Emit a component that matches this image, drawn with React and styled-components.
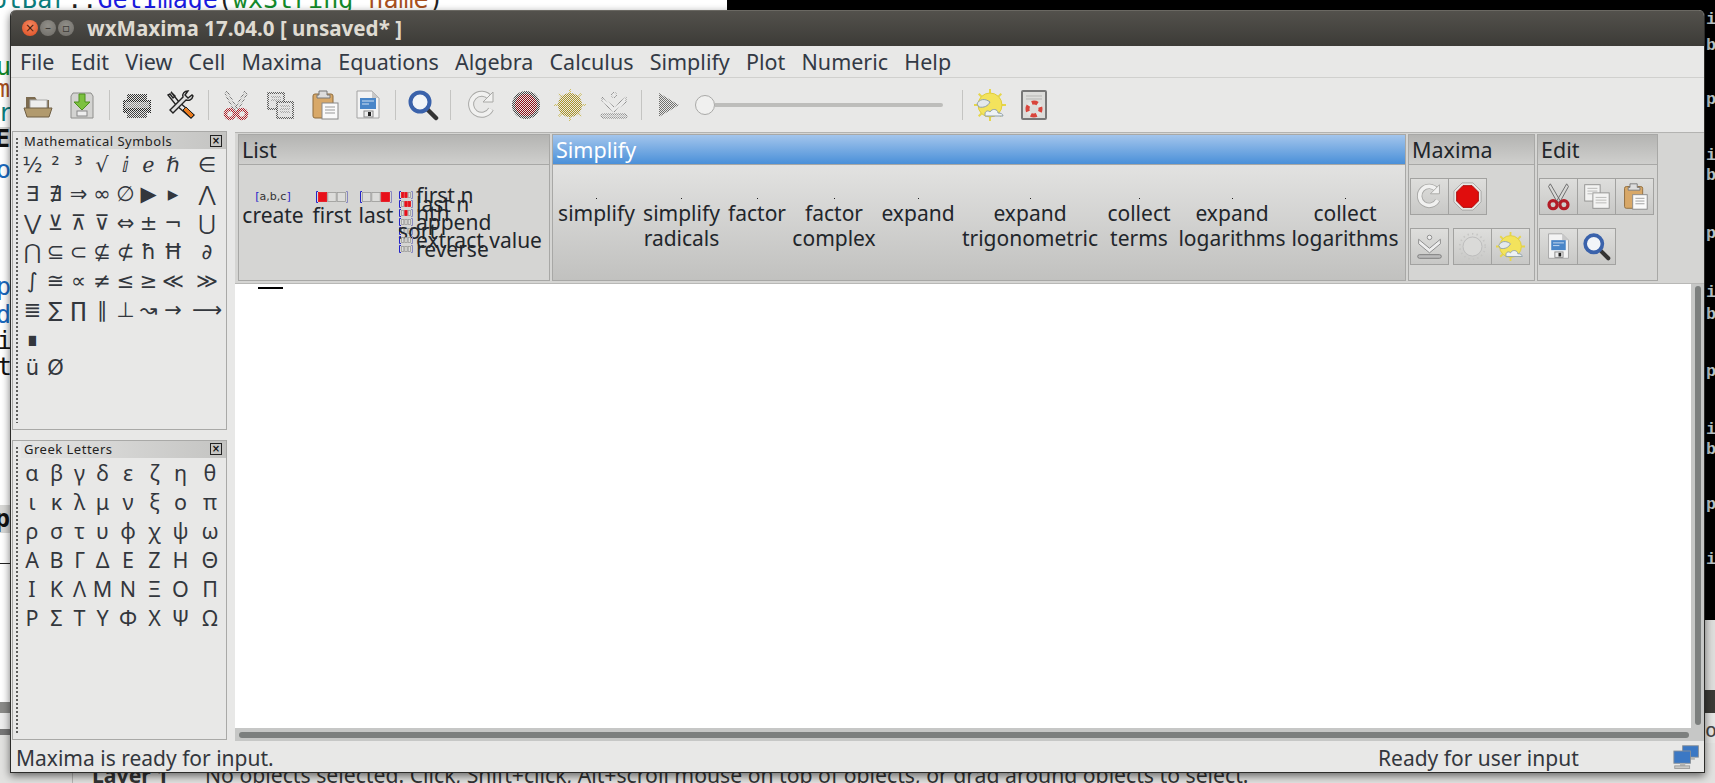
import React from 'react';
import styled, { createGlobalStyle } from 'styled-components';

const GlobalStyle = createGlobalStyle`
  html, body {
    margin: 0;
    padding: 0;
    background: #000;
    overflow: hidden;
  }
`;

const UI_FONT = '"Noto Sans", "Open Sans", sans-serif';

const Desktop = styled.div`
  position: relative;
  width: 1715px;
  height: 783px;
  overflow: hidden;
  background: #000;
  font-family: ${UI_FONT};
`;

// stuff from the other windows, sticking out round the edges
const BackRect = styled.div`
  position: absolute;
  left: ${(p) => p.$x}px;
  top: ${(p) => p.$y}px;
  width: ${(p) => p.$w}px;
  height: ${(p) => p.$h}px;
  background: ${(p) => p.$bg};
`;

const BackText = styled.span`
  position: absolute;
  left: ${(p) => p.$x}px;
  top: ${(p) => p.$y}px;
  font-family: "DejaVu Sans Mono", monospace;
  font-size: ${(p) => p.$size || 25}px;
  line-height: 1;
  font-weight: ${(p) => (p.$bold ? 700 : 400)};
  color: ${(p) => p.$color || '#111'};
  white-space: pre;
`;

const CodeToken = styled.span`
  color: ${(p) => p.$color};
`;

const TermText = styled(BackText)`
  font-family: "Liberation Mono", monospace;
  font-size: 17px;
  font-weight: 700;
  color: #b9c4c8;
`;

const StatusLine = styled.span`
  position: absolute;
  left: ${(p) => p.$x}px;
  top: 760px;
  font-family: ${UI_FONT};
  font-size: 21.200px;
  font-weight: ${(p) => (p.$bold ? 700 : 400)};
  color: #333;
  white-space: pre;
`;

const Window = styled.div`
  position: absolute;
  left: 10px;
  top: 10px;
  width: 1695px;
  height: 763px;
  box-sizing: border-box;
  display: flex;
  flex-direction: column;
  background: #e8e8e7;
  border: 1px solid #2c2c2a;
  border-top: none;
  border-radius: 6px 6px 0 0;
  box-shadow: 0 3px 9px rgba(0, 0, 0, 0.55);
  overflow: hidden;
`;

const TitleBar = styled.div`
  height: 36px;
  flex: none;
  display: flex;
  align-items: center;
  padding: 0 0 1px 11px;
  background: linear-gradient(#53514c, #3c3b37);
  border-top: 1px solid #6a6862;
  box-sizing: border-box;
`;

const WinButton = styled.div`
  width: 16px;
  height: 16px;
  margin-right: 2px;
  border-radius: 50%;
  display: flex;
  align-items: center;
  justify-content: center;
  font-size: 12px;
  line-height: 1;
  color: ${(p) => (p.$close ? '#4a1a08' : '#3b3a36')};
  background: ${(p) =>
    p.$close
      ? 'radial-gradient(circle at 50% 35%, #f58a64, #dc4a1e)'
      : 'radial-gradient(circle at 50% 35%, #918f89, #6d6b66)'};
  font-family: "DejaVu Sans", sans-serif;
`;

const Title = styled.div`
  margin-left: 11px;
  color: #dfdbd2;
  font-size: 20.600px;
  font-weight: 700;
  white-space: pre;
`;

const MenuBar = styled.div`
  height: 32px;
  flex: none;
  box-sizing: border-box;
  display: flex;
  align-items: center;
  gap: 16.200px;
  padding-left: 9px;
  background: #e8e8e7;
  border-bottom: 1px solid #d0d0ce;
`;

const MenuItem = styled.span`
  font-size: 21.500px;
  color: #333a45;
`;

const Toolbar = styled.div`
  height: 54px;
  flex: none;
  box-sizing: border-box;
  display: flex;
  align-items: center;
  padding-left: 5px;
  background: #e8e8e7;
`;

const ToolButton = styled.div`
  width: 44px;
  height: 44px;
  flex: none;
  display: flex;
  align-items: center;
  justify-content: center;
`;

const Separator = styled.div`
  width: 1px;
  height: 30px;
  margin: 0 ${(p) => p.$after || 5}px 0 5px;
  flex: none;
  background: #c4c4c2;
`;

const Slider = styled.div`
  width: 248px;
  flex: none;
  margin: 0 14px 0 4px;
  display: flex;
  align-items: center;
`;

const SliderKnob = styled.div`
  width: 20px;
  height: 20px;
  flex: none;
  box-sizing: border-box;
  border-radius: 50%;
  background: #f0f0ef;
  border: 1px solid #a9a9a7;
`;

const SliderRail = styled.div`
  flex: 1;
  height: 4px;
  border-radius: 0 2px 2px 0;
  background: #bdbdbb;
`;

const Body = styled.div`
  flex: 1;
  min-height: 0;
  display: flex;
`;

const Dock = styled.div`
  width: 224px;
  flex: none;
  display: flex;
  flex-direction: column;
  gap: 10px;
  margin-top: -1px;
  padding: 0 8px 1px 1px;
  box-sizing: border-box;
`;

const DockPane = styled.div`
  flex: ${(p) => p.$grow};
  box-sizing: border-box;
  display: flex;
  border: 1px solid #a9a9a7;
  background: #e8e8e7;
`;

const Gripper = styled.div`
  width: 8px;
  flex: none;
  background-image: repeating-linear-gradient(#5f5f5d 0 2px, transparent 2px 4px);
  background-size: 2px calc(100% - 12px);
  background-position: 3px 6px;
  background-repeat: no-repeat;
`;

const DockInner = styled.div`
  flex: 1;
  min-width: 0;
`;

const DockCaption = styled.div`
  height: 17px;
  display: flex;
  align-items: center;
  justify-content: space-between;
  padding: 0 4px 0 3px;
  font-size: 13px;
  color: #222;
  letter-spacing: 0.5px;
  background: linear-gradient(90deg, #e4e4e3, #c4c4c2);
`;

const CloseBox = styled.div`
  width: 10px;
  height: 10px;
  border: 1px solid #222;
  font-size: 10px;
  line-height: 10px;
  text-align: center;
  font-weight: 700;
  letter-spacing: 0;
  color: #111;
  font-family: "DejaVu Sans", sans-serif;
`;

const SymbolGrid = styled.div`
  display: grid;
  grid-template-columns: ${(p) => p.$cols};
  grid-auto-rows: 29px;
  margin: ${(p) => p.$top}px 0 0 ${(p) => p.$offset}px;
`;

const SymbolCell = styled.span`
  display: flex;
  align-items: center;
  justify-content: center;
  font-family: ${(p) => p.$font};
  font-size: ${(p) => p.$size}px;
  color: #33373d;
  white-space: nowrap;
`;

const Main = styled.div`
  flex: 1;
  min-width: 0;
  display: flex;
  flex-direction: column;
`;

const Ribbon = styled.div`
  height: 152px;
  flex: none;
  box-sizing: border-box;
  display: flex;
  gap: 2px;
  padding: 1px 0 2px 3px;
  background: #d5d5d3;
  border-top: 1px solid #b3b3b1;
  border-bottom: 1px solid #b8b8b6;
`;

const Pane = styled.div`
  width: ${(p) => p.$w}px;
  flex: none;
  box-sizing: border-box;
  display: flex;
  flex-direction: column;
  border: 1px solid #a8a8a6;
  background: ${(p) => (p.$active ? 'linear-gradient(#ebebea, #c1c1bf)' : '#d5d5d3')};
`;

const PaneCaption = styled.div`
  height: 30px;
  flex: none;
  box-sizing: border-box;
  padding-left: 3px;
  display: flex;
  align-items: center;
  font-size: 21.500px;
  color: ${(p) => (p.$active ? '#fff' : '#22262b')};
  background: ${(p) =>
    p.$active
      ? 'linear-gradient(#a3c5ec, #4a90d9)'
      : 'linear-gradient(#b4b4b2, #cfcfcd)'};
  border-bottom: 1px solid #a8a8a6;
`;

const ListButtons = styled.div`
  display: flex;
  align-items: flex-start;
  padding: 28px 0 0 2px;
`;

const BigItem = styled.div`
  width: ${(p) => p.$w}px;
  flex: none;
  display: flex;
  flex-direction: column;
  align-items: center;
  font-size: 21px;
  line-height: 28px;
  color: #22262b;
  white-space: nowrap;
`;

const ListPicWrap = styled.div`
  height: 8px;
  display: flex;
  align-items: center;
  justify-content: center;
`;

const CreatePic = styled.span`
  font-family: "DejaVu Sans", sans-serif;
  font-size: 11px;
  line-height: 8px;
  color: #333;
  b {
    font-weight: 400;
    color: #2323c8;
  }
`;

const SmallList = styled.div`
  display: flex;
  flex-direction: column;
  margin-top: -3px;
  margin-left: 6px;
`;

const SmallRow = styled.div`
  height: 9px;
  display: flex;
  align-items: center;
  gap: 3px;
  font-size: 21px;
  line-height: 20px;
  color: #22262b;
  white-space: nowrap;
`;

const SmallLabel = styled.span`
  margin-left: ${(p) => p.$shift || 0}px;
`;

const SimplifyRow = styled.div`
  display: flex;
  padding: 33px 0 0 1px;
`;

const TextButton = styled.div`
  width: ${(p) => p.$w}px;
  flex: none;
  display: flex;
  flex-direction: column;
  align-items: center;
  text-align: center;
  font-size: 21px;
  line-height: 25px;
  color: #22262b;
`;

const TinyDot = styled.div`
  width: 1px;
  height: 1px;
  margin-bottom: 2px;
  background: #222;
`;

const ButtonGrid = styled.div`
  display: flex;
  flex-direction: column;
  gap: 13px;
  padding: 13px 0 0 1px;
`;

const ButtonRow = styled.div`
  display: flex;
  gap: ${(p) => p.$gap || 0}px;
`;

const ButtonGroup = styled.div`
  display: flex;
`;

const IconButton = styled.div`
  width: 39px;
  height: 37px;
  box-sizing: border-box;
  display: flex;
  align-items: center;
  justify-content: center;
  background: linear-gradient(#dededc, #c8c8c6);
  border: 1px solid #a2a2a0;
  margin-left: -1px;
  &:first-child {
    margin-left: 0;
  }
`;

const EditorRow = styled.div`
  flex: 1;
  min-height: 0;
  display: flex;
`;

const Canvas = styled.div`
  flex: 1;
  background: #fff;
  padding: 3px 0 0 23px;
`;

const CellCursor = styled.div`
  width: 25px;
  height: 2px;
  background: #000;
`;

const VScroll = styled.div`
  width: 13px;
  flex: none;
  box-sizing: border-box;
  padding: 2px 3px 3px 4px;
  background: #c6c7c6;
`;

const HScroll = styled.div`
  height: 13px;
  flex: none;
  box-sizing: border-box;
  padding: 4px 15px 3px 4px;
  background: #c6c7c6;
`;

const Thumb = styled.div`
  width: 100%;
  height: 100%;
  border-radius: 3px;
  background: #7c7f7e;
`;

const StatusBar = styled.div`
  height: 31px;
  flex: none;
  box-sizing: border-box;
  display: flex;
  align-items: center;
  padding: 3px 3px 0 5px;
  font-size: 21px;
  color: #33373d;
  background: #e8e8e7;
`;

const StatusLeft = styled.div`
  width: 1362px;
  flex: none;
`;

const StatusRight = styled.div`
  flex: 1;
`;

// dithered look gtk gives the disabled toolbar images
const Dithered = ({ on, children }) =>
  on ? (
    <>
      <defs>
        <pattern id="dith" width="2" height="2" patternUnits="userSpaceOnUse">
          <rect width="1" height="1" fill="#fff" />
          <rect x="1" y="1" width="1" height="1" fill="#fff" />
        </pattern>
        <mask id="dithmask">
          <rect width="40" height="40" fill="url(#dith)" />
        </mask>
      </defs>
      <g mask="url(#dithmask)">{children}</g>
    </>
  ) : (
    children
  );

const rays = [0, 45, 90, 135, 180, 225, 270, 315];

const drawings = {
  folder: (
    <>
      <path d="M4 8h9l2 3h12v16H4z" fill="#7b6a4f" />
      <rect x="8" y="11" width="17" height="10" fill="#eee" stroke="#aaa" />
      <path d="M2 19h28l-3 9H5z" fill="#b19a6e" stroke="#6f5f45" />
    </>
  ),
  save: (
    <>
      <path d="M7 4h18l2 3v22H5V7z" fill="#d3d3d1" stroke="#8e8e8c" />
      <rect x="11" y="22" width="10" height="5" fill="#eee" stroke="#888" />
      <path d="M13 5h6v8h5l-8 8-8-8h5z" fill="#7cc13f" stroke="#4d8f1f" />
    </>
  ),
  printer: (
    <>
      <rect x="6" y="5" width="20" height="7" fill="#333" />
      <path d="M2 11h28v13H2z" fill="#222" />
      <rect x="4" y="13" width="24" height="6" fill="#888" />
      <rect x="6" y="22" width="20" height="7" fill="#444" />
    </>
  ),
  tools: (
    <>
      <path d="M6 3l8 10-3 3L3 6l2-1 3 4 2-2-4-4z" fill="#e8e8e8" stroke="#222" strokeWidth="1.4" />
      <path d="M11 16l3-3 15 13-3 3z" fill="#e8e8e8" stroke="#222" strokeWidth="1.4" />
      <path d="M28 7c-1 4-4 5-7 4L8 24l-3-3L18 8c-1-3 1-6 5-6l-3 4 3 3 4-3z" fill="#e0e0e0" stroke="#222" strokeWidth="1.4" />
      <path d="M18 21l3-3 8 8-3 3z" fill="#e97a1d" stroke="#222" />
    </>
  ),
  scissors: (
    <>
      <path d="M7 2l11 19-3 2L5 5zM25 2L14 21l3 2L27 5z" fill="#d8d8d6" stroke="#666" />
      <circle cx="10" cy="25" r="4.500" fill="none" stroke="#b21c26" strokeWidth="3.500" />
      <circle cx="22" cy="25" r="4.500" fill="none" stroke="#b21c26" strokeWidth="3.500" />
    </>
  ),
  copyOff: (
    <>
      <rect x="4" y="4" width="16" height="16" fill="#ddd" stroke="#333" strokeWidth="1.500" />
      <rect x="13" y="13" width="16" height="16" fill="#ddd" stroke="#333" strokeWidth="1.500" />
      <path d="M7 8h10M7 11h10M16 17h10M16 20h10M16 23h10" stroke="#777" />
    </>
  ),
  copy: (
    <>
      <rect x="3" y="3" width="17" height="18" fill="#f3f3f2" stroke="#8f8f8d" />
      <rect x="12" y="12" width="18" height="17" fill="#f3f3f2" stroke="#8f8f8d" />
      <path d="M6 7h11M6 10h11M6 13h5M15 17h12M15 20h12M15 23h12" stroke="#b5b5b3" />
    </>
  ),
  paste: (
    <>
      <rect x="5" y="5" width="20" height="24" rx="2" fill="#d8a868" stroke="#8d6b3c" />
      <path d="M11 6V2h8v4h3v3H9V6z" fill="#ddd" stroke="#777" />
      <rect x="14" y="14" width="16" height="16" fill="#fafafa" stroke="#888" />
      <path d="M17 18h10M17 21h10M17 24h10" stroke="#999" />
    </>
  ),
  floppy: (
    <>
      <path d="M5 2h15l7 7v20H5z" fill="#f3f3f3" stroke="#a3a3a3" />
      <path d="M20 2v7h7z" fill="#c8c8c8" />
      <rect x="8" y="9" width="16" height="11" fill="#4a86c8" />
      <path d="M10 12h12M10 15h7" stroke="#cfe0f2" />
      <rect x="12" y="22" width="9" height="6" fill="#eee" stroke="#888" />
      <rect x="16" y="23" width="3" height="4" fill="#222" />
    </>
  ),
  magnifier: (
    <>
      <path d="M20 20l9 9" stroke="#333" strokeWidth="4.500" strokeLinecap="round" />
      <circle cx="13" cy="13" r="9.500" fill="#f1f4f8" stroke="#3a62ab" strokeWidth="4" />
    </>
  ),
  refresh: (
    <>
      <path d="M25 20a10.500 10.500 0 1 1-1-11" fill="none" stroke="#a8a8a6" strokeWidth="6" />
      <path d="M25 20a10.500 10.500 0 1 1-1-11" fill="none" stroke="#f1f1f0" strokeWidth="4" />
      <path d="M27 3v10H17z" fill="#f1f1f0" stroke="#a8a8a6" />
    </>
  ),
  stop: (
    <>
      <path d="M10 1h12l9 9v12l-9 9H10l-9-9V10z" fill="#e8e8e6" stroke="#a5a5a3" />
      <path d="M11 4h10l7 7v10l-7 7H11l-7-7V11z" fill="#e00d0d" stroke="#a90808" />
    </>
  ),
  stopDim: (
    <>
      <circle cx="16" cy="16" r="14" fill="#444" />
      <circle cx="16" cy="16" r="11" fill="#8d0a12" />
    </>
  ),
  sun: (
    <>
      {rays.map((r) => (
        <path key={r} d="M16 0v5" stroke="#cdbf66" strokeWidth="2" transform={`rotate(${r} 16 16)`} />
      ))}
      <circle cx="16" cy="16" r="12" fill="#ab9426" />
    </>
  ),
  sunOff: (
    <>
      <circle cx="16" cy="16" r="14" fill="none" stroke="#c5c5c3" strokeWidth="2" strokeDasharray="1.500 3.500" />
      <circle cx="16" cy="16" r="10.500" fill="#dadad8" stroke="#bbb" />
    </>
  ),
  step: (
    <>
      <circle cx="16" cy="6" r="2.500" fill="#eee" stroke="#888" />
      <path d="M4 8l12 10L28 8v5L16 23 4 13z" fill="#eee" stroke="#888" />
      <rect x="3" y="25" width="26" height="4" rx="2" fill="#bbb" stroke="#777" />
    </>
  ),
  play: <path d="M6 4l20 12L6 28z" fill="#6f6f6d" />,
  weather: (
    <>
      {rays.map((r) => (
        <path key={r} d="M16 0v4" stroke="#e6d64a" strokeWidth="2" transform={`rotate(${r} 16 16)`} />
      ))}
      <circle cx="16" cy="16" r="12" fill="#f3e35c" stroke="#e0cd3c" />
      <path d="M3 15c2-5 8-6 13-2-2 4-6 6-11 5z" fill="#e4e9ed" stroke="#8fa0ab" />
      <path d="M11 25c0-3 3-4 5-2 2-4 8-3 8 1 3 0 5 1 5 3H11z" fill="#eef2f5" stroke="#8fa0ab" />
    </>
  ),
  help: (
    <>
      <rect x="4" y="2" width="24" height="28" rx="1" fill="#dcdcda" stroke="#777" strokeWidth="2" />
      <path d="M8 7h16M8 10h16" stroke="#b5b5b3" />
      <circle cx="16" cy="20" r="6.500" fill="none" stroke="#e4e4e2" strokeWidth="4" />
      <circle cx="16" cy="20" r="6.500" fill="none" stroke="#d9453c" strokeWidth="4" strokeDasharray="6 4.200" strokeDashoffset="3" />
    </>
  ),
  network: (
    <>
      <rect x="11" y="2" width="18" height="13" fill="#3b78c4" stroke="#8a9096" />
      <rect x="17" y="15" width="8" height="3" fill="#b5b5b3" />
      <rect x="1" y="8" width="19" height="14" fill="#3b78c4" stroke="#8a9096" />
      <rect x="8" y="22" width="6" height="3" fill="#b5b5b3" />
      <rect x="2" y="25" width="17" height="3" fill="#c9c9c7" stroke="#999" />
    </>
  ),
};

const Icon = ({ name, size = 32, dither }) => (
  <svg width={size} height={size} viewBox="0 0 32 32">
    <Dithered on={dither}>{drawings[name]}</Dithered>
  </svg>
);

// little list pictures, brackets with grey and red squares
const ListPic = ({ cells, width = 14, height = 8 }) => {
  const step = (width - 4) / cells.length;
  return (
    <svg width={width} height={height} viewBox={`0 0 ${width} ${height}`}>
      <path d={`M2 .5H.5v${height - 1}H2`} fill="none" stroke="#2323c8" />
      {cells.map((c, i) => (
        <rect
          key={i}
          x={2.500 + i * step}
          y="1.500"
          width={step - 1}
          height={height - 3}
          fill={c ? '#e8101a' : '#dcdcda'}
          stroke={c ? '#e8101a' : '#9a9a98'}
          strokeWidth="0.8"
        />
      ))}
      <path d={`M${width - 2} .5h1.500v${height - 1}H${width - 2}`} fill="none" stroke="#8888c0" />
    </svg>
  );
};

const menus = ['File', 'Edit', 'View', 'Cell', 'Maxima', 'Equations', 'Algebra', 'Calculus', 'Simplify', 'Plot', 'Numeric', 'Help'];

const mathSymbols = [
  '½', '²', '³', '√', 'ⅈ', 'ℯ', 'ℏ', '∈',
  '∃', '∄', '⇒', '∞', '∅', '▶', '▸', '⋀',
  '⋁', '⊻', '⊼', '⊽', '⇔', '±', '¬', '⋃',
  '⋂', '⊆', '⊂', '⊈', '⊄', 'ħ', 'Ħ', '∂',
  '∫', '≅', '∝', '≠', '≤', '≥', '≪', '≫',
  '≣', '∑', '∏', '∥', '⊥', '↝', '→', '⟶',
  '∎', '', '', '', '', '', '', '',
  'ü', 'Ø',
];

const greek = 'αβγδεζηθικλμνξοπρστυφχψωΑΒΓΔΕΖΗΘΙΚΛΜΝΞΟΠΡΣΤΥΦΧΨΩ'.split('');

const simplifyButtons = [
  ['simplify', '', 85],
  ['simplify', 'radicals', 85],
  ['factor', '', 66],
  ['factor', 'complex', 88],
  ['expand', '', 80],
  ['expand', 'trigonometric', 144],
  ['collect', 'terms', 74],
  ['expand', 'logarithms', 112],
  ['collect', 'logarithms', 114],
];

const smallRows = [
  ['first n', [1, 1, 0]],
  ['last n', [0, 1, 1]],
  ['nth', [0, 1, 0]],
  ['append', [0, 0, 0]],
  ['sort', [0, 0, 0], -18],
  ['extract value', [0, 0, 0]],
  ['reverse', [0, 0, 0]],
];

const termRows = [
  ['i', 20], ['b', 46], ['p', 100], ['i', 156], ['b', 176], ['p', 234], ['i', 293],
  ['b', 315], ['p', 372], ['i', 430], ['b', 450], ['p', 505], ['i', 560],
];

const App = () => (
  <Desktop>
    <GlobalStyle />

    {/* windows behind */}
    <BackRect $x={0} $y={0} $w={727} $h={783} $bg="#fff" />
    <BackText $x={-8} $y={-13} $color="#0b7d7d">
      otBar
      <CodeToken $color="#222">::</CodeToken>
      <CodeToken $color="#1a1ae0">GetImage</CodeToken>
      <CodeToken $color="#222">(</CodeToken>
      <CodeToken $color="#128a2a">wxString</CodeToken>{' '}
      <CodeToken $color="#a8501e">name</CodeToken>
      <CodeToken $color="#222">)</CodeToken>
    </BackText>
    <BackText $x={-4} $y={54} $color="#128a2a">u</BackText>
    <BackText $x={-5} $y={76} $color="#a8501e">m</BackText>
    <BackText $x={-2} $y={100} $color="#0b7d7d">r</BackText>
    <BackRect $x={0} $y={127} $w={10} $h={20} $bg="#d4d4d2" />
    <BackText $x={-5} $y={126} $bold>E</BackText>
    <BackText $x={-4} $y={157} $color="#1a6ac0">o</BackText>
    <BackText $x={-4} $y={274} $color="#1a6ac0">p</BackText>
    <BackText $x={-4} $y={302} $color="#1a6ac0">d</BackText>
    <BackText $x={-3} $y={328}>i</BackText>
    <BackText $x={-3} $y={354}>t</BackText>
    <BackRect $x={0} $y={505} $w={10} $h={28} $bg="#d8d8d6" />
    <BackText $x={-5} $y={506} $bold>p</BackText>
    <BackRect $x={0} $y={563} $w={10} $h={1} $bg="#222" />
    <BackRect $x={0} $y={702} $w={10} $h={11} $bg="#8b8b89" />
    <BackRect $x={0} $y={713} $w={10} $h={16} $bg="#eee" />
    <BackRect $x={0} $y={729} $w={10} $h={6} $bg="#777" />
    <BackRect $x={0} $y={735} $w={1715} $h={48} $bg="#e2e2e0" />
    <BackRect $x={72} $y={772} $w={1} $h={11} $bg="#b5b5b3" />
    <StatusLine $x={92} $bold>Layer 1</StatusLine>
    <StatusLine $x={205}>No objects selected. Click, Shift+click, Alt+scroll mouse on top of objects, or drag around objects to select.</StatusLine>

    {termRows.map(([c, y], i) => (
      <TermText key={i} $x={1706} $y={y - 9}>{c}</TermText>
    ))}
    <BackRect $x={1705} $y={620} $w={10} $h={70} $bg="#dededc" />
    <BackRect $x={1705} $y={690} $w={10} $h={23} $bg="#3c3b37" />
    <BackRect $x={1705} $y={713} $w={10} $h={30} $bg="#e6e6e4" />
    <BackText $x={1705} $y={720} $size={20} $color="#444">o</BackText>

    <Window>
      <TitleBar>
        <WinButton $close>×</WinButton>
        <WinButton>–</WinButton>
        <WinButton>▫</WinButton>
        <Title>wxMaxima 17.04.0 [ unsaved* ]</Title>
      </TitleBar>

      <MenuBar>
        {menus.map((m) => (
          <MenuItem key={m}>{m}</MenuItem>
        ))}
      </MenuBar>

      <Toolbar>
        <ToolButton><Icon name="folder" /></ToolButton>
        <ToolButton><Icon name="save" /></ToolButton>
        <Separator />
        <ToolButton><Icon name="printer" dither /></ToolButton>
        <ToolButton><Icon name="tools" /></ToolButton>
        <Separator />
        <ToolButton><Icon name="scissors" dither /></ToolButton>
        <ToolButton><Icon name="copyOff" dither /></ToolButton>
        <ToolButton><Icon name="paste" /></ToolButton>
        <ToolButton><Icon name="floppy" /></ToolButton>
        <Separator />
        <ToolButton><Icon name="magnifier" /></ToolButton>
        <Separator $after={9} />
        <ToolButton><Icon name="refresh" /></ToolButton>
        <ToolButton><Icon name="stopDim" dither /></ToolButton>
        <ToolButton><Icon name="sun" dither /></ToolButton>
        <ToolButton><Icon name="step" dither /></ToolButton>
        <Separator />
        <ToolButton><Icon name="play" dither /></ToolButton>
        <Slider>
          <SliderKnob />
          <SliderRail />
        </Slider>
        <Separator />
        <ToolButton><Icon name="weather" /></ToolButton>
        <ToolButton><Icon name="help" /></ToolButton>
      </Toolbar>

      <Body>
        <Dock>
          <DockPane $grow="298">
            <Gripper />
            <DockInner>
              <DockCaption>Mathematical Symbols<CloseBox>×</CloseBox></DockCaption>
              <SymbolGrid $cols="23px 23px 23px 24px 23px 23px 26px 42px" $offset={0} $top={1}>
                {mathSymbols.map((s, i) => (
                  <SymbolCell key={i} $font={'"DejaVu Sans", sans-serif'} $size={21}>{s}</SymbolCell>
                ))}
              </SymbolGrid>
            </DockInner>
          </DockPane>
          <DockPane $grow="300">
            <Gripper />
            <DockInner>
              <DockCaption>Greek Letters<CloseBox>×</CloseBox></DockCaption>
              <SymbolGrid $cols="24px 25px 21px 25px 26px 27px 25px 34px" $offset={-1} $top={0}>
                {greek.map((s, i) => (
                  <SymbolCell key={i} $font={UI_FONT} $size={21.5}>{s}</SymbolCell>
                ))}
              </SymbolGrid>
            </DockInner>
          </DockPane>
        </Dock>

        <Main>
          <Ribbon>
            <Pane $w={312}>
              <PaneCaption>List</PaneCaption>
              <ListButtons>
                <BigItem $w={64}>
                  <ListPicWrap>
                    <CreatePic><b>[</b>a,b,c<b>]</b></CreatePic>
                  </ListPicWrap>
                  create
                </BigItem>
                <BigItem $w={54}>
                  <ListPicWrap><ListPic cells={[1, 0, 0]} width={32} height={12} /></ListPicWrap>
                  first
                </BigItem>
                <BigItem $w={34}>
                  <ListPicWrap><ListPic cells={[0, 0, 1]} width={32} height={12} /></ListPicWrap>
                  last
                </BigItem>
                <SmallList>
                  {smallRows.map(([label, cells, shift]) => (
                    <SmallRow key={label}>
                      <ListPic cells={cells} />
                      <SmallLabel $shift={shift}>{label}</SmallLabel>
                    </SmallRow>
                  ))}
                </SmallList>
              </ListButtons>
            </Pane>

            <Pane $w={854} $active>
              <PaneCaption $active>Simplify</PaneCaption>
              <SimplifyRow>
                {simplifyButtons.map(([a, b, w], i) => (
                  <TextButton key={i} $w={w}>
                    <TinyDot />
                    <span>{a}</span>
                    <span>{b}</span>
                  </TextButton>
                ))}
              </SimplifyRow>
            </Pane>

            <Pane $w={127}>
              <PaneCaption>Maxima</PaneCaption>
              <ButtonGrid>
                <ButtonRow>
                  <ButtonGroup>
                    <IconButton><Icon name="refresh" size={29} /></IconButton>
                    <IconButton><Icon name="stop" size={29} /></IconButton>
                  </ButtonGroup>
                </ButtonRow>
                <ButtonRow $gap={4}>
                  <ButtonGroup>
                    <IconButton><Icon name="step" size={29} /></IconButton>
                  </ButtonGroup>
                  <ButtonGroup>
                    <IconButton><Icon name="sunOff" size={29} /></IconButton>
                    <IconButton><Icon name="weather" size={29} /></IconButton>
                  </ButtonGroup>
                </ButtonRow>
              </ButtonGrid>
            </Pane>

            <Pane $w={121}>
              <PaneCaption>Edit</PaneCaption>
              <ButtonGrid>
                <ButtonRow>
                  <ButtonGroup>
                    <IconButton><Icon name="scissors" size={29} /></IconButton>
                    <IconButton><Icon name="copy" size={29} /></IconButton>
                    <IconButton><Icon name="paste" size={29} /></IconButton>
                  </ButtonGroup>
                </ButtonRow>
                <ButtonRow>
                  <ButtonGroup>
                    <IconButton><Icon name="floppy" size={29} /></IconButton>
                    <IconButton><Icon name="magnifier" size={29} /></IconButton>
                  </ButtonGroup>
                </ButtonRow>
              </ButtonGrid>
            </Pane>
          </Ribbon>

          <EditorRow>
            <Canvas>
              <CellCursor />
            </Canvas>
            <VScroll><Thumb /></VScroll>
          </EditorRow>
          <HScroll><Thumb /></HScroll>
        </Main>
      </Body>

      <StatusBar>
        <StatusLeft>Maxima is ready for input.</StatusLeft>
        <StatusRight>Ready for user input</StatusRight>
        <Icon name="network" size={28} />
      </StatusBar>
    </Window>
  </Desktop>
);

export default App;
